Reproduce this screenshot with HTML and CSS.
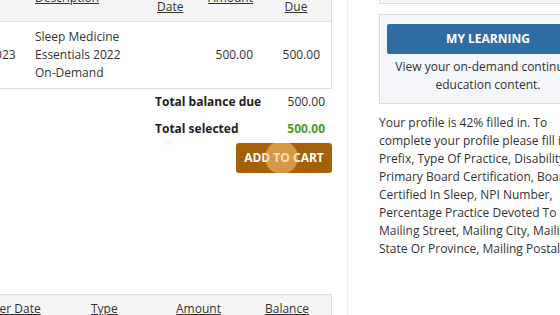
FILE: index.html
```html
<!DOCTYPE html>
<html lang="en">
<head>
<meta charset="utf-8">
<title>Invoices</title>
<link rel="stylesheet" href="styles.css">
</head>
<body>
<div class="page">
  <main class="main">
    <table class="grid items">
      <colgroup>
        <col class="i1"><col class="i2"><col class="i3"><col class="i4"><col class="i5">
      </colgroup>
      <thead>
        <tr>
          <th><a href="#">Invoice<br>Date</a></th>
          <th><a href="#">Description</a></th>
          <th><a href="#">Due<br>Date</a></th>
          <th class="right"><a href="#">Amount</a></th>
          <th class="center"><a href="#">Balance<br>Due</a></th>
        </tr>
      </thead>
      <tbody>
        <tr>
          <td class="date">01/01/2023</td>
          <td>Sleep Medicine Essentials 2022 On-Demand</td>
          <td></td>
          <td class="right">500.00</td>
          <td class="right due">500.00</td>
        </tr>
      </tbody>
    </table>

    <div class="totals">
      <div class="tlabel">Total balance due</div>
      <div class="tvalue">500.00</div>
      <div class="tlabel">Total selected</div>
      <div class="tvalue green">500.00</div>
    </div>

    <button class="cart-btn" type="button">ADD TO CART<span class="tap"></span></button>

    <table class="grid history">
      <colgroup>
        <col class="h1"><col class="h2"><col class="h3"><col class="h4"><col class="h5">
      </colgroup>
      <thead>
        <tr>
          <th></th>
          <th><a href="#">Order Date</a></th>
          <th><a href="#">Type</a></th>
          <th><a href="#">Amount</a></th>
          <th><a href="#">Balance</a></th>
        </tr>
      </thead>
    </table>
  </main>

  <aside class="side">
    <div class="card card-top"></div>
    <div class="card card-learning">
      <a class="learn-btn" href="#">MY LEARNING</a>
      <p class="learn-text">View your on-demand continuing education content.</p>
    </div>
    <p class="profile">Your profile is 42% filled in. To complete your profile please fill in Prefix, Type Of Practice, Disability, Primary Board Certification, Board Certified In Sleep, NPI Number, Percentage Practice Devoted To Sleep, Mailing Street, Mailing City, Mailing State Or Province, Mailing Postal Code.</p>
  </aside>
</div>
</body>
</html>
```

FILE: styles.css
```css
html, body {
  margin: 0;
  padding: 0;
  background: #ffffff;
}

body {
  overflow: hidden;
  font-family: "Open Sans", "Liberation Sans", sans-serif;
  font-size: 12px;
  line-height: 18px;
  color: #333333;
}

.page {
  display: flex;
  align-items: stretch;
  margin: -26px 0 0 -60px;
  min-height: 420px;
}

.main {
  flex: none;
  width: 392px;
  display: flex;
  flex-direction: column;
}

table {
  border-collapse: separate;
  border-spacing: 0;
  table-layout: fixed;
  width: 392px;
}

.grid {
  border: 1px solid #dedede;
}

th {
  background: #f5f5f5;
  font-weight: normal;
  text-align: left;
  padding: 5px 8px;
  vertical-align: middle;
}

.items th {
  border-bottom: 1px solid #e2e2e2;
}

th a {
  color: #333333;
  text-decoration: underline;
}

td {
  padding: 6px 8px;
  vertical-align: middle;
}

td.date { padding-left: 11px; padding-right: 4px; }

.right { text-align: right; }
.center { text-align: center; }
td.due { padding-right: 11px; }

.i1 { width: 86px; }
.i2 { width: 122px; }
.i3 { width: 50px; }
.i4 { width: 62px; }
.i5 { width: 70px; }

.h1 { width: 29px; }
.h2 { width: 113px; }
.h3 { width: 85px; }
.h4 { width: 89px; }
.h5 { width: 74px; }

.totals {
  align-self: flex-end;
  width: 185px;
  display: grid;
  grid-template-columns: 1fr auto;
  font-weight: bold;
}

.tlabel {
  padding: 4px 8px 5px 8px;
  color: #222222;
}

.tvalue {
  padding: 4px 7px 5px 8px;
  text-align: right;
  font-weight: normal;
}

.tvalue.green {
  color: #4e9a2e;
  font-weight: bold;
}

.cart-btn {
  position: relative;
  align-self: flex-end;
  overflow: hidden;
  border: 0;
  border-radius: 3px;
  background: #a5610a;
  color: #ffffff;
  font-family: inherit;
  font-size: 12px;
  font-weight: bold;
  line-height: 18px;
  padding: 6px 8px;
  width: 96px;
}

.tap {
  position: absolute;
  left: 29px;
  top: -2px;
  width: 33px;
  height: 33px;
  border-radius: 50%;
  background: rgba(255, 196, 120, 0.55);
}

.history {
  margin-top: 121px;
}

.history th {
  padding: 5px 8px;
}

.side {
  flex: none;
  width: 218px;
  margin-left: 15px;
  padding-left: 31px;
  border-left: 1px solid #ececec;
  display: flex;
  flex-direction: column;
}

.card {
  border: 1px solid #dcdcdc;
}

.card-top {
  height: 28px;
  background: #f7f7f7;
}

.card-learning {
  margin-top: 10px;
  background: #f4f6f9;
  padding: 9px 7px 9px 7px;
  text-align: center;
}

.learn-btn {
  display: block;
  background: #2f6ea5;
  color: #ffffff;
  font-weight: bold;
  font-size: 12px;
  line-height: 18px;
  padding: 6px 0;
  text-decoration: none;
  border-radius: 2px;
}

.learn-text {
  margin: 4px 0 0 0;
}

.profile {
  margin: 10px 0 0 0;
}
```
